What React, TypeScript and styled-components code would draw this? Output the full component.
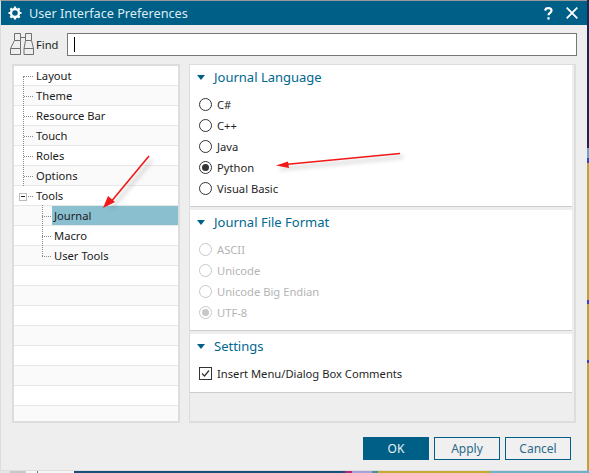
import styled, { createGlobalStyle } from "styled-components";

const Global = createGlobalStyle`
    html, body {
        margin : 0;
        padding : 0;
        width : 589px;
        height : 473px;
        overflow : hidden;
    }
    body {
        font-family : "Noto Sans", "Open Sans", sans-serif;
        font-size : 11.2px;
        color : #222;
    }
`;

// the desktop behind the dialog only shows as a thin strip on the right and bottom
const Desktop = styled.div`
    position : relative;
    width : 589px;
    height : 473px;
    overflow : hidden;
    background :
        linear-gradient(90deg,
            #e6e6e6 0 10px, #c8c8c8 10px 26px, #f6f6f6 26px 37px, #777 37px 38px, #f6f6f6 38px 74px,
            #1a5078 74px 345px, #b02a78 345px 352px, #a8a0d8 352px 372px, #4a9098 372px 378px,
            #c4ac30 378px 490px, #6fb2c8 490px 589px) bottom / 100% 3px no-repeat,
        linear-gradient(180deg,
            #22234f 0 148px, #6aa6cc 148px 158px, #3048b8 158px 163px,
            #bca632 163px 300px, #3048b8 300px 304px, #bca632 304px 360px, #3048b8 360px 363px,
            #bca632 363px 473px) right / 2px 100% no-repeat,
        #bca632;
`;

const Dialog = styled.div`
    width : 587px;
    height : 471px;
    box-sizing : border-box;
    border-top : 1px solid #9a9a9a;
    border-left : 1px solid #ddd;
    border-bottom : 1px solid #ddd;
    background : #eeeeee;
    display : flex;
    flex-direction : column;
`;

const TitleBar = styled.div`
    height : 24px;
    flex : none;
    background : #005f87;
    color : #dcebf2;
    display : flex;
    align-items : center;
    padding : 0 9px 0 7px;
    font-size : 12.7px;
`;

const Title = styled.span`
    margin-left : 7px;
    flex : 1;
`;

const TitleButton = styled.button`
    border : none;
    background : none;
    padding : 0;
    color : white;
    display : flex;
    margin-left : 13px;
`;

const FindRow = styled.div`
    display : flex;
    align-items : center;
    height : 23px;
    margin : 8px 10px 0 9px;
`;

const FindLabel = styled.span`
    width : 31px;
    margin-left : 2px;
    font-size : 11.2px;
`;

const FindInput = styled.div`
    flex : 1;
    height : 23px;
    box-sizing : border-box;
    border : 1px solid #777;
    background : white;
    display : flex;
    align-items : center;
    padding-left : 6px;
`;

const Caret = styled.div`
    width : 1px;
    height : 15px;
    background : #000;
`;

const Panes = styled.div`
    display : flex;
    margin : 8px 11px 0 11px;
    height : 359px;
    gap : 9px;
`;

const TreePane = styled.div`
    width : 168px;
    box-sizing : border-box;
    border : 2px solid #ddd;
    background : white;
    overflow : hidden;
`;

const Row = styled.div<{ $odd: boolean }>`
    position : relative;
    height : 20px;
    box-sizing : border-box;
    border-bottom : 1px solid #e8e8e8;
    background : ${(p) => (p.$odd ? "#fafafa" : "white")};
`;

const RowLabel = styled.span<{ $level: number; $selected: boolean }>`
    position : absolute;
    top : 0;
    bottom : 0;
    left : ${(p) => (p.$level ? 38 : 20)}px;
    right : 0;
    padding-left : 2px;
    line-height : 20px;
    background : ${(p) => (p.$selected ? "#8abfd0" : "transparent")};
    color : #1b1b1b;
`;

const Branch = styled.i<{ $level: number }>`
    position : absolute;
    top : 10px;
    left : ${(p) => (p.$level ? 28 : 10)}px;
    width : 9px;
    border-top : 1px dotted #888;
`;

const Trunk = styled.i<{ $level: number; $top: number; $bottom: number }>`
    position : absolute;
    top : ${(p) => p.$top}px;
    bottom : ${(p) => p.$bottom}px;
    left : ${(p) => (p.$level ? 28 : 9)}px;
    border-left : 1px dotted #888;
`;

const Expander = styled.i`
    position : absolute;
    z-index : 1;
    top : 7px;
    left : 5px;
    width : 8px;
    height : 8px;
    box-sizing : border-box;
    border : 1px solid #bbb;
    background : white;
    &::after {
        content : "";
        position : absolute;
        left : 1px;
        right : 1px;
        top : 2px;
        border-top : 1px solid #222;
    }
`;

const OptionsPane = styled.div`
    flex : 1;
    box-sizing : border-box;
    border : 1px solid #ddd;
    border-width : 1px 2px 2px 1px;
    padding-right : 2px;
    display : flex;
    flex-direction : column;
    gap : 3px;
`;

const Section = styled.section<{ $height: number }>`
    height : ${(p) => p.$height}px;
    flex : none;
    box-sizing : border-box;
    background : white;
    border-bottom : 1px solid #ccc;
    padding : 0 0 0 9px;
`;

const SectionHead = styled.div`
    display : flex;
    align-items : center;
    height : 24px;
    margin-bottom : 5px;
    color : #00688f;
    font-size : 13px;
`;

const Triangle = styled.i`
    width : 0;
    height : 0;
    border-left : 4.5px solid transparent;
    border-right : 4.5px solid transparent;
    border-top : 5px solid #005f87;
    margin : 0 9px 0 -2px;
`;

const Choice = styled.div<{ $disabled?: boolean }>`
    display : flex;
    align-items : center;
    height : 21px;
    color : ${(p) => (p.$disabled ? "#b4b4b4" : "#1f1f1f")};
`;

const Radio = styled.i<{ $disabled?: boolean; $checked?: boolean }>`
    position : relative;
    width : 13px;
    height : 13px;
    box-sizing : border-box;
    border-radius : 50%;
    border : 1px solid ${(p) => (p.$disabled ? "#c8c8c8" : "#333")};
    background : white;
    margin-right : 5px;
    &::after {
        content : "";
        display : ${(p) => (p.$checked ? "block" : "none")};
        position : absolute;
        inset : 2px;
        border-radius : 50%;
        background : ${(p) => (p.$disabled ? "#c8c8c8" : "#333")};
    }
`;

const CheckBox = styled.i`
    display : flex;
    width : 13px;
    height : 13px;
    box-sizing : border-box;
    border : 1px solid #333;
    margin-right : 5px;
    color : #333;
`;

const Footer = styled.div`
    display : flex;
    justify-content : flex-end;
    gap : 5px;
    margin : 14px 16px 0 0;
`;

const Button = styled.button<{ $primary?: boolean }>`
    width : 66px;
    height : 23px;
    box-sizing : border-box;
    border : 1px solid #005f87;
    background : ${(p) => (p.$primary ? "#005f87" : "#f0f0f0")};
    color : ${(p) => (p.$primary ? "#e8f2f6" : "#2b6a88")};
    font-family : inherit;
    font-size : 12px;
    padding : 0;
`;

const ArrowLayer = styled.svg`
    position : absolute;
    inset : 0;
    pointer-events : none;
`;

const treeItems = [
    { label: "Layout", level: 0 },
    { label: "Theme", level: 0 },
    { label: "Resource Bar", level: 0 },
    { label: "Touch", level: 0 },
    { label: "Roles", level: 0 },
    { label: "Options", level: 0 },
    { label: "Tools", level: 0 },
    { label: "Journal", level: 1 },
    { label: "Macro", level: 1 },
    { label: "User Tools", level: 1 },
];

const rows = Array.from({ length: 18 }, (_, i) => treeItems[i] ?? null);

const languages = ["C#", "C++", "Java", "Python", "Visual Basic"];
const formats = ["ASCII", "Unicode", "Unicode Big Endian", "UTF-8"];

function Gear() {
    return (
        <svg width="14" height="14" viewBox="0 0 14 14" fill="none">
            <circle cx="7" cy="7" r="4" stroke="white" strokeWidth="2.4" />
            <path d="M7 0.5v2.5M7 11v2.5M0.5 7h2.5M11 7h2.5M2.4 2.4l1.8 1.8M9.8 9.8l1.8 1.8M2.4 11.6l1.8-1.8M9.8 4.2l1.8-1.8" stroke="white" strokeWidth="2.2" />
        </svg>
    );
}

function Binoculars() {
    return (
        <svg width="24" height="23" viewBox="0 0 24 23" fill="none" stroke="#707070" strokeWidth="1">
            <path d="M4.5 0.5h6v7h-6zM15.5 0.5h6v7h-6z" />
            <path d="M4.5 7.5 0.5 15.5v6h10v-6l0-8M21.5 7.5l2 8v6h-9.5v-6l1.5-8" />
            <path d="M10.5 4.5h5M0.5 15.5h10M14 15.5h9.5" />
        </svg>
    );
}

export default function App() {
    return (
        <Desktop>
            <Global />
            <Dialog>
                <TitleBar>
                    <Gear />
                    <Title>User Interface Preferences</Title>
                    <TitleButton>
                        <svg width="9" height="13" viewBox="0 0 9 13" fill="none" stroke="white" strokeWidth="2.2">
                            <path d="M1.2 3.6C1.4 1.9 2.8 1.2 4.3 1.2c1.9 0 3.2 1 3.2 2.5 0 2.2-3 2.2-3 4.6" />
                            <path d="M4.5 10.2v2.4" />
                        </svg>
                    </TitleButton>
                    <TitleButton>
                        <svg width="12" height="12" viewBox="0 0 12 12" stroke="white" strokeWidth="1.8">
                            <path d="M0.7 0.7 11.3 11.3M11.3 0.7 0.7 11.3" />
                        </svg>
                    </TitleButton>
                </TitleBar>
                <FindRow>
                    <Binoculars />
                    <FindLabel>Find</FindLabel>
                    <FindInput>
                        <Caret />
                    </FindInput>
                </FindRow>
                <Panes>
                    <TreePane>
                        {rows.map((item, i) => (
                            <Row key={i} $odd={i % 2 === 1}>
                                {item && (
                                    <>
                                        {item.level === 0 && i < 6 && (
                                            <Trunk $level={0} $top={i === 0 ? 10 : -1} $bottom={-1} />
                                        )}
                                        {i === 6 && <Expander />}
                                        {item.level === 1 && (
                                            <Trunk $level={1} $top={-1} $bottom={i === 9 ? 9 : -1} />
                                        )}
                                        <Branch $level={item.level} />
                                        <RowLabel $level={item.level} $selected={item.label === "Journal"}>
                                            {item.label}
                                        </RowLabel>
                                    </>
                                )}
                            </Row>
                        ))}
                    </TreePane>
                    <OptionsPane>
                        <Section $height={142}>
                            <SectionHead>
                                <Triangle />
                                Journal Language
                            </SectionHead>
                            {languages.map((name) => (
                                <Choice key={name}>
                                    <Radio $checked={name === "Python"} />
                                    {name}
                                </Choice>
                            ))}
                        </Section>
                        <Section $height={121}>
                            <SectionHead>
                                <Triangle />
                                Journal File Format
                            </SectionHead>
                            {formats.map((name) => (
                                <Choice key={name} $disabled>
                                    <Radio $disabled $checked={name === "UTF-8"} />
                                    {name}
                                </Choice>
                            ))}
                        </Section>
                        <Section $height={59}>
                            <SectionHead>
                                <Triangle />
                                Settings
                            </SectionHead>
                            <Choice>
                                <CheckBox>
                                    <svg width="11" height="11" viewBox="0 0 11 11" fill="none" stroke="currentColor" strokeWidth="1.2">
                                        <path d="M2 5.5 4.5 8 9 2.5" />
                                    </svg>
                                </CheckBox>
                                Insert Menu/Dialog Box Comments
                            </Choice>
                        </Section>
                    </OptionsPane>
                </Panes>
                <Footer>
                    <Button $primary>OK</Button>
                    <Button>Apply</Button>
                    <Button>Cancel</Button>
                </Footer>
            </Dialog>
            <ArrowLayer width="589" height="473" viewBox="0 0 589 473">
                <defs>
                    <filter id="arrowShadow" x="-30%" y="-30%" width="160%" height="160%">
                        <feGaussianBlur stdDeviation="2" />
                    </filter>
                </defs>
                <g transform="translate(3 4)" fill="#555" stroke="#555" opacity="0.45" filter="url(#arrowShadow)">
                    <path d="M149 156 108 205" strokeWidth="1.5" />
                    <path d="M277 165 400 153" strokeWidth="1.5" />
                </g>
                <path d="M149 156 110 203" stroke="#f01818" strokeWidth="1.6" fill="none" />
                <path d="M103 208 108 196 115 202z" fill="#f01818" />
                <path d="M285 164.5 400 153.5" stroke="#f01818" strokeWidth="1.6" fill="none" />
                <path d="M276 165.5 288 161.5 289 168z" fill="#f01818" />
            </ArrowLayer>
        </Desktop>
    );
}
